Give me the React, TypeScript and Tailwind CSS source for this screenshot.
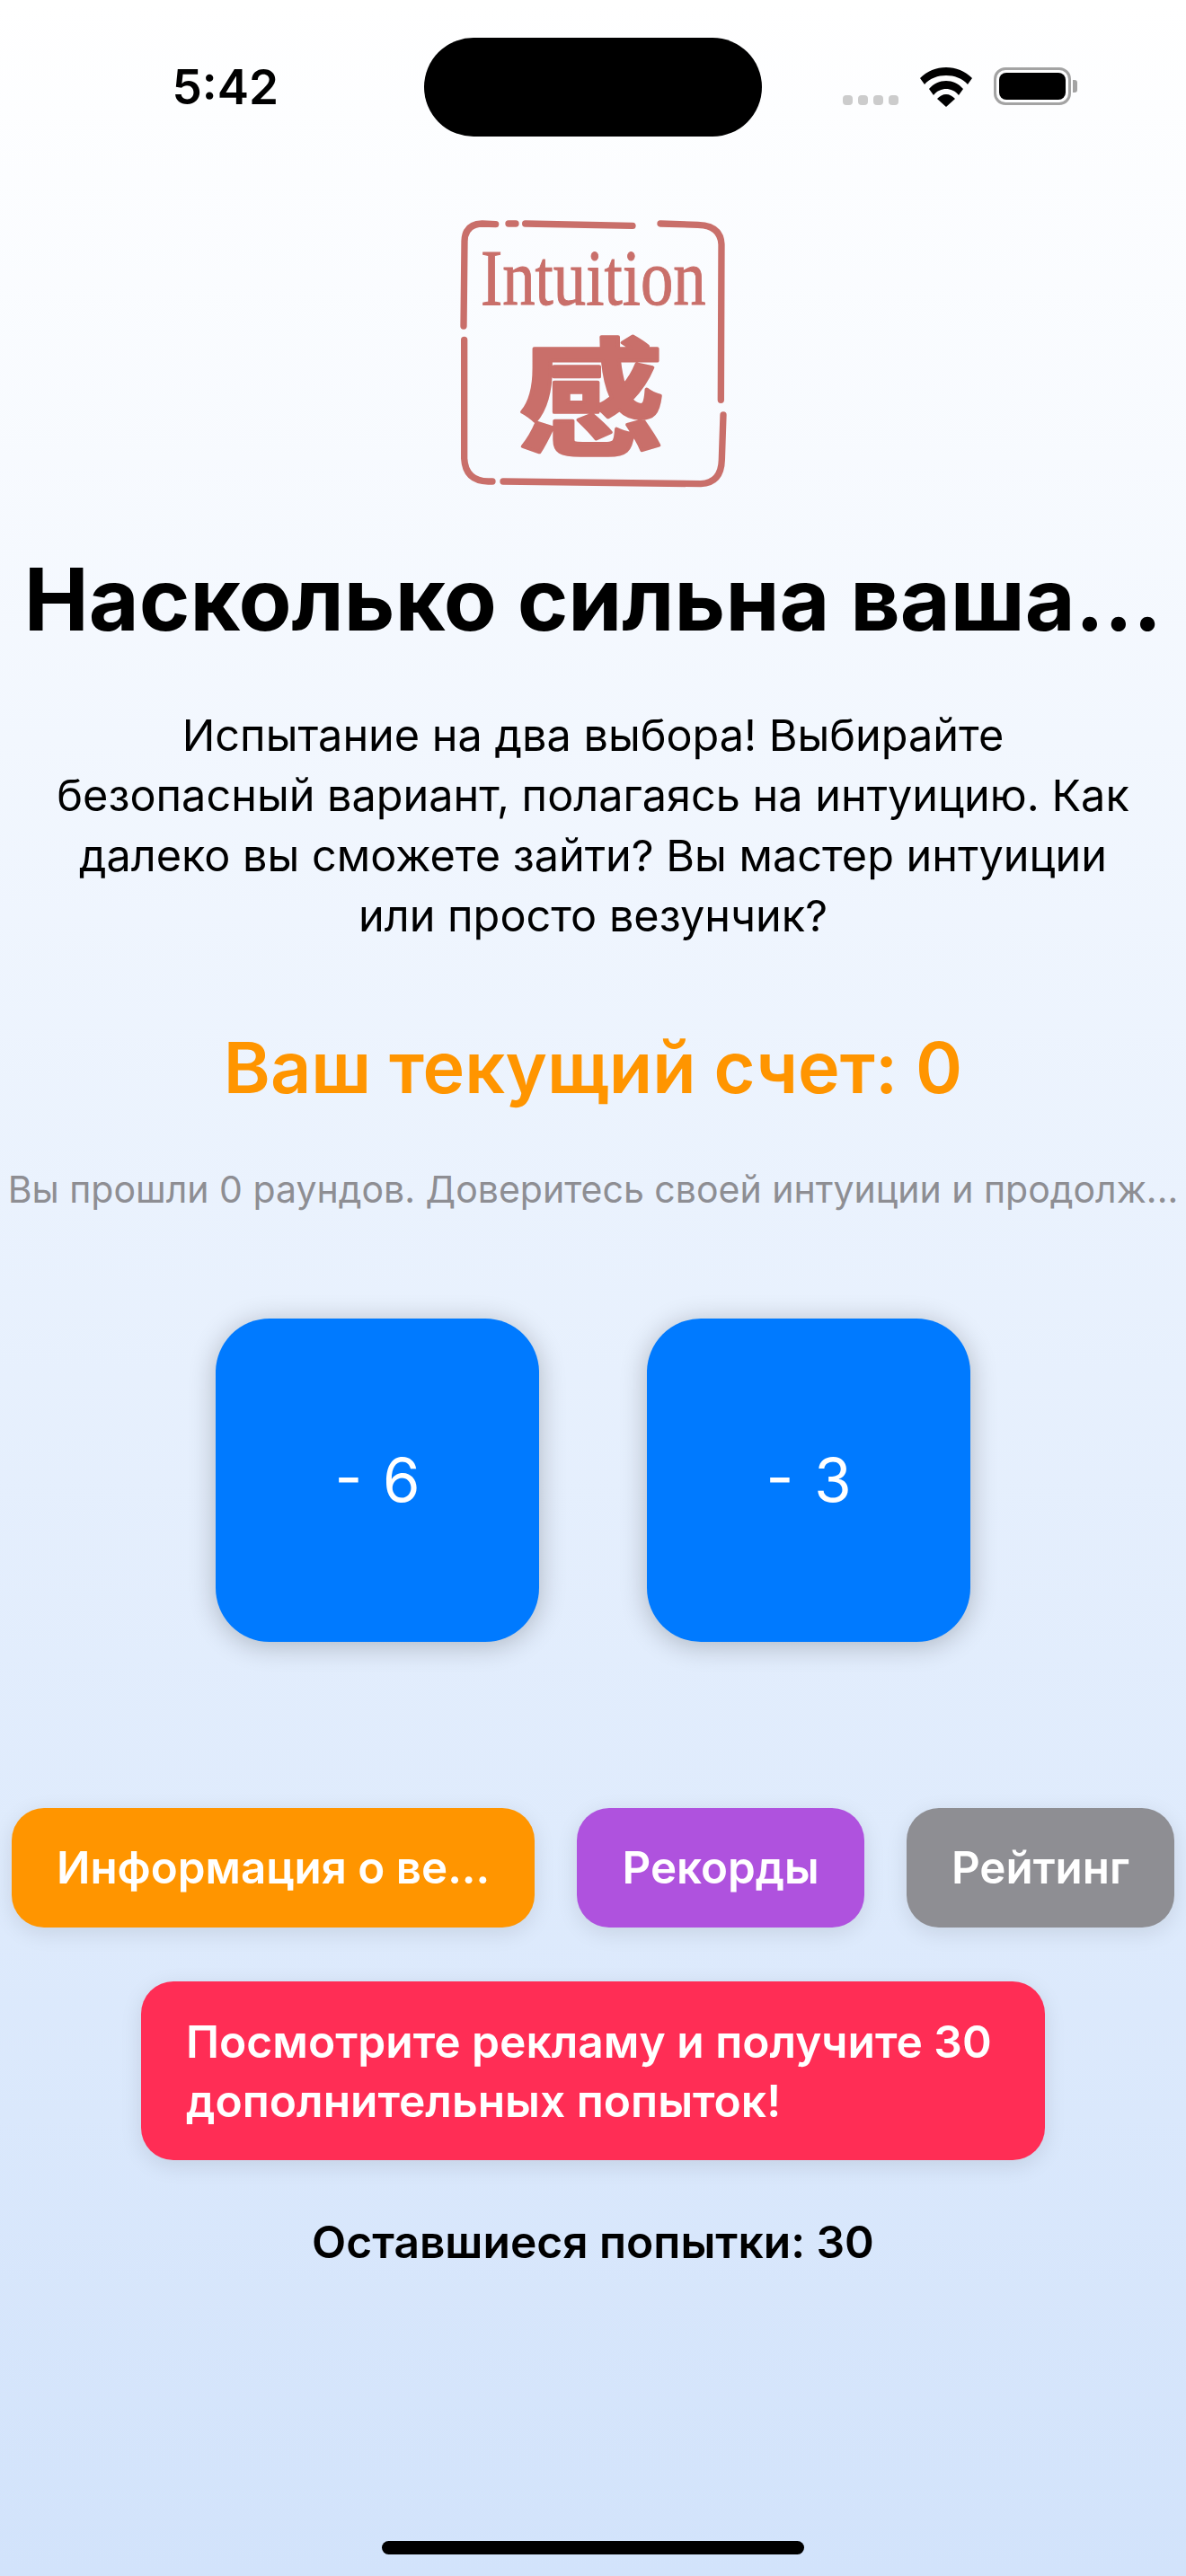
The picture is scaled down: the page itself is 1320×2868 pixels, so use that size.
import React from "react";

const sans = "font-['Inter','Noto_Sans',sans-serif]";

function Seal() {
  return (
    <svg viewBox="0 0 1080 1020" className="w-[360px] h-[340px]">
      <g fill="none" stroke="#c96f6a" strokeLinecap="round" strokeWidth="22">
        <path d="M215 98 L170 96 Q112 98 111 155 L108 438" />
        <path d="M258 96 L282 96" />
        <path d="M314 96 L672 103" />
        <path d="M765 96 L890 100 Q966 102 969 165 L967 685" />
        <path d="M110 484 L110 880 Q114 955 190 957 L204 957" />
        <path d="M240 957 L900 965 Q968 962 970 885 L975 735" />
      </g>
      <text
        x="165"
        y="365"
        textLength="752"
        lengthAdjust="spacingAndGlyphs"
        fontFamily="'Liberation Serif', serif"
        fontSize="265"
        fill="#c96f6a"
        stroke="#c96f6a"
        strokeWidth="3"
      >
        Intuition
      </text>
      <g transform="translate(533 675) scale(1.06 0.93)">
        <text
          x="0"
          y="175"
          textAnchor="middle"
          fontFamily="'Noto Sans CJK SC', sans-serif"
          fontWeight="700"
          fontSize="460"
          fill="#c96f6a"
          stroke="#c96f6a"
          strokeWidth="12"
          strokeLinejoin="round"
        >
          感
        </text>
      </g>
    </svg>
  );
}

function Wifi() {
  return (
    <svg viewBox="0 0 58 44" className="w-[58px] h-[44px]">
      <path d="M29 0 C18 0 8 4 0 12 L5 19 C11 12 20 9 29 9 C38 9 47 12 53 19 L58 12 C50 4 40 0 29 0 Z" fill="#000" />
      <path d="M29 15 C22 15 15 18 10 24 L15 31 C19 26 24 24 29 24 C34 24 39 26 43 31 L48 24 C43 18 36 15 29 15 Z" fill="#000" />
      <path d="M29 30 C25 30 22 32 19 35 L29 44 L39 35 C36 32 33 30 29 30 Z" fill="#000" />
    </svg>
  );
}

function Battery() {
  return (
    <div className="flex items-center gap-[2px]">
      <div className="w-[86px] h-[42px] rounded-[13px] border-[3px] border-[#a3a3a3] p-[3px]">
        <div className="w-full h-full rounded-[8px] bg-black" />
      </div>
      <div className="w-[5px] h-[14px] rounded-r-[3px] bg-[#a3a3a3]" />
    </div>
  );
}

function StatusBar() {
  return (
    <div className="grid grid-cols-[472px_376px_472px] pt-[42px] h-[152px]">
      <div className="flex items-start justify-end pr-[162px] pt-[26px]">
        <span className="text-[53px] leading-[58px] font-semibold text-black">5:42</span>
      </div>
      <div className="h-[110px] rounded-[55px] bg-black" />
      <div className="flex items-start pt-[33px] pl-[90px]">
        <div className="flex items-end h-[42px] gap-[6px] mr-[24px]">
          <span className="w-[11px] h-[11px] rounded-[4px] bg-[#cccccc]" />
          <span className="w-[11px] h-[11px] rounded-[4px] bg-[#cccccc]" />
          <span className="w-[11px] h-[11px] rounded-[4px] bg-[#cccccc]" />
          <span className="w-[11px] h-[11px] rounded-[4px] bg-[#cccccc]" />
        </div>
        <Wifi />
        <div className="ml-[24px]">
          <Battery />
        </div>
      </div>
    </div>
  );
}

function Card({ label }: { label: string }) {
  return (
    <div className="w-[360px] h-[360px] rounded-[60px] bg-[#007aff] shadow-[0_4px_30px_rgba(0,0,0,0.24)] flex items-center justify-center text-white text-[67px] font-normal [word-spacing:4px]">
      {label}
    </div>
  );
}

function Pill({ label, color }: { label: string; color: string }) {
  return (
    <div className={`h-[133px] rounded-[36px] px-[50px] flex items-center text-white text-[49.3px] font-semibold whitespace-nowrap shadow-[0_6px_24px_rgba(0,0,0,0.1)] ${color}`}>
      {label}
    </div>
  );
}

export default function App() {
  return (
    <div className={`w-[1320px] h-[2868px] overflow-hidden flex flex-col items-center bg-gradient-to-b from-white to-[#d2e3fb] ${sans}`}>
      <div className="w-full">
        <StatusBar />
      </div>
      <div className="mt-[65px]">
        <Seal />
      </div>
      <h1 className="mt-[52px] text-[96.4px] leading-[116px] font-bold text-black whitespace-nowrap">Насколько сильна ваша...</h1>
      <p className="mt-[60px] w-full text-center text-[48.6px] leading-[67px] font-normal text-black">
        Испытание на два выбора! Выбирайте
        <br />
        безопасный вариант, полагаясь на интуицию. Как
        <br />
        далеко вы сможете зайти? Вы мастер интуиции
        <br />
        или просто везунчик?
      </p>
      <div className="mt-[88px] text-[79px] leading-[94px] font-semibold text-[#ff9500]">Ваш текущий счет: 0</div>
      <div className="mt-[63px] text-[41px] leading-[52px] text-[#8e8e93] whitespace-nowrap">Вы прошли 0 раундов. Доверитесь своей интуиции и продолж...</div>
      <div className="mt-[118px] flex gap-[120px]">
        <Card label="- 6" />
        <Card label="- 3" />
      </div>
      <div className="mt-[185px] w-full px-[13px] flex justify-between">
        <Pill label="Информация о ве..." color="bg-[#ff9500]" />
        <Pill label="Рекорды" color="bg-[#af52de]" />
        <Pill label="Рейтинг" color="bg-[#8e8e93]" />
      </div>
      <div className="mt-[60px] w-[1006px] h-[199px] rounded-[36px] px-[50px] flex items-center bg-[#ff2d55] text-white text-[49.7px] leading-[66px] font-semibold shadow-[0_6px_24px_rgba(0,0,0,0.1)]">
        Посмотрите рекламу и получите 30 дополнительных попыток!
      </div>
      <div className="mt-[62px] text-[49.7px] leading-[58px] font-semibold text-black">Оставшиеся попытки: 30</div>
      <div className="mt-auto mb-[24px] w-[470px] h-[15px] rounded-full bg-black" />
    </div>
  );
}
